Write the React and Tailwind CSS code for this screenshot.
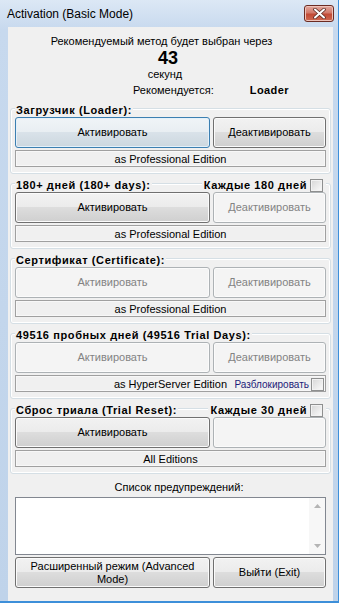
import React from "react";

const btnStyles = {
  normal:
    "border-[#707070] bg-[linear-gradient(#f2f2f2_0%,#ebebeb_50%,#dddddd_50%,#cfcfcf_100%)] text-black shadow-[inset_0_0_0_1px_#fbfbfb]",
  focus:
    "border-[#3c7fb1] bg-[linear-gradient(#f0f4f7_0%,#e8eef2_50%,#d9e2e9_50%,#ccd7df_100%)] text-black shadow-[inset_0_0_0_1px_#e4f1fa]",
  disabled: "border-[#adb2b5] bg-[#f4f4f4] text-[#838383] shadow-[inset_0_0_0_1px_#fbfbfb]",
};

const Btn = ({ state = "normal", children, className = "" }) => (
  <div
    className={`flex h-[31px] items-center justify-center rounded-[3px] border text-center leading-[13px] ${btnStyles[state]} ${className}`}
  >
    {children}
  </div>
);

const Check = () => (
  <span className="inline-block h-[13px] w-[13px] shrink-0 border border-[#8e8f8f] bg-[linear-gradient(135deg,#d6d6d6,#fbfbfb)] shadow-[inset_0_0_0_1px_#f2f2f2]" />
);

const Group = ({ title, right, activate = "normal", deactivate = "disabled", deactivateText = "Деактивировать", edition, unlock }) => (
  <div className="mx-[2px] mt-[9px] rounded-[3px] border border-[#d5dfe5] px-[4px] pb-[6px] shadow-[inset_0_0_0_1px_#ffffff]">
    <div className="-mt-[6px] flex h-[14px] items-center justify-between">
      <span className="bg-[#f0f0f0] px-[1px] font-bold leading-[14px] tracking-[0.6px]">{title}</span>
      {right && (
        <span className="flex items-center gap-[3px] bg-[#f0f0f0] pl-[2px] pr-[3px] font-bold leading-[14px] tracking-[0.6px]">
          {right}
          <Check />
        </span>
      )}
    </div>
    <div className="grid grid-cols-[195px_1fr] gap-[3px]">
      <Btn state={activate}>Активировать</Btn>
      <Btn state={deactivate}>{deactivateText}</Btn>
    </div>
    <div className="mt-[2px] grid h-[17px] grid-cols-[1fr_auto_1fr] items-center border border-[#a0a0a0] bg-[#f0f0f0] shadow-[inset_0_0_0_1px_#f8f8f8]">
      <span />
      <span className="whitespace-nowrap">{edition}</span>
      <span className="flex items-center justify-end gap-[2px] pr-[1px]">
        {unlock && (
          <>
            <span className="text-[10px] text-[#1c1c78]">{unlock}</span>
            <Check />
          </>
        )}
      </span>
    </div>
  </div>
);

export default function App() {
  return (
    <div className="h-[604px] w-[341px] bg-white font-['Liberation_Sans',Arial,sans-serif] text-[11px] text-black">
      <div className="flex h-[603px] w-[339px] flex-col border-b-2 border-r border-[#3d8fd9] bg-[linear-gradient(#dce8f5_0px,#c7d9ee_30px,#bfd3ea_100%)]">
        <div className="flex h-[27px] shrink-0 items-center justify-between pl-[7px] pr-[4px]">
          <span className="text-[12px]">Activation (Basic Mode)</span>
          <div className="flex h-[17px] w-[30px] items-center justify-center rounded-[3px] border border-[#6b2b22] bg-[linear-gradient(#e3a89d_0%,#d27a6b_45%,#c24a35_55%,#cf6a52_100%)] shadow-[inset_0_0_0_1px_#eec3ba]">
            <svg width="13" height="11" viewBox="0 0 13 11">
              <path d="M2 1.5 L11 9.5 M11 1.5 L2 9.5" stroke="#5a2a22" strokeWidth="3.6" strokeLinecap="round" />
              <path d="M2 1.5 L11 9.5 M11 1.5 L2 9.5" stroke="#ffffff" strokeWidth="2" strokeLinecap="round" />
            </svg>
          </div>
        </div>

        <div className="ml-[8px] mr-[5px] flex flex-1 flex-col bg-[#f0f0f0] pb-[9px]">
          <div className="pr-[18px] pt-[8px] text-center leading-[13px]">Рекомендуемый метод будет выбран через</div>
          <div className="pr-[5px] text-center text-[18px] font-bold leading-[20px]">43</div>
          <div className="pr-[11px] text-center leading-[13px]">секунд</div>
          <div className="mt-[3px] flex gap-[36px] pl-[125px] leading-[13px]">
            <span>Рекомендуется:</span>
            <span className="font-bold tracking-[0.4px]">Loader</span>
          </div>

          <div className="mt-[2px]">
            <Group title="Загрузчик (Loader):" activate="focus" deactivate="normal" edition="as Professional Edition" />
            <Group title="180+ дней (180+ days):" right="Каждые 180 дней" edition="as Professional Edition" />
            <Group title="Сертификат (Certificate):" activate="disabled" edition="as Professional Edition" />
            <Group
              title="49516 пробных дней (49516 Trial Days):"
              activate="disabled"
              edition="as HyperServer Edition"
              unlock="Разблокировать"
            />
            <Group title="Сброс триала (Trial Reset):" right="Каждые 30 дней" deactivateText="" edition="All Editions" />
          </div>

          <div className="mt-[7px] pl-[17px] text-center leading-[13px]">Список предупреждений:</div>
          <div className="mx-[7px] mt-[3px] flex h-[58px] border border-[#828790] bg-white">
            <div className="flex-1" />
            <div className="flex w-[16px] flex-col items-center justify-between bg-[#f7f7f7] py-[6px] pl-[1px]">
              <svg width="7" height="4" viewBox="0 0 7 4">
                <path d="M0 4 L3.5 0 L7 4 Z" fill="#b4b4b4" />
              </svg>
              <svg width="7" height="4" viewBox="0 0 7 4">
                <path d="M0 0 L3.5 4 L7 0 Z" fill="#b4b4b4" />
              </svg>
            </div>
          </div>
          <div className="mx-[7px] mt-[2px] grid grid-cols-[195px_1fr] gap-[3px]">
            <Btn>
              Расширенный режим (Advanced
              <br />
              Mode)
            </Btn>
            <Btn>Выйти (Exit)</Btn>
          </div>
        </div>
      </div>
    </div>
  );
}
